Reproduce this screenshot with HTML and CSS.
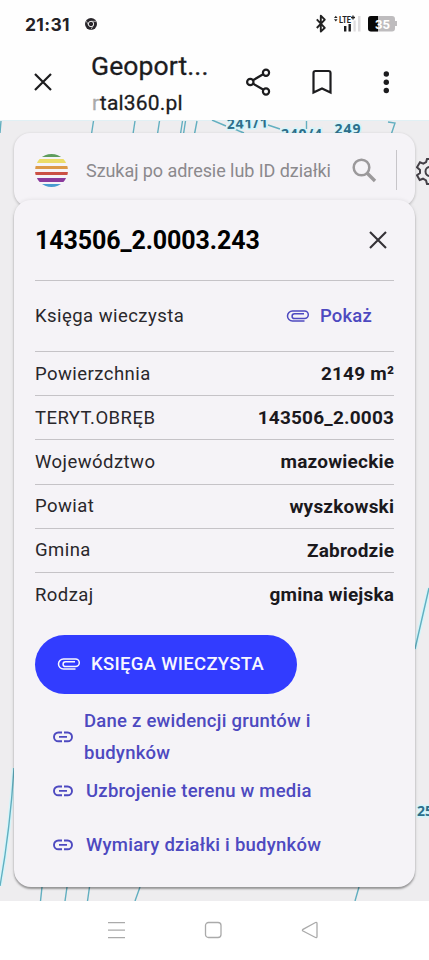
FILE: index.html
```html
<!DOCTYPE html>
<html lang="pl">
<head>
<meta charset="utf-8">
<title>Geoportal360.pl</title>
<link rel="stylesheet" href="styles.css">
</head>
<body>
<header class="status">
  <span class="clock">21:31</span>
  <svg class="chrome" width="12" height="12" viewBox="0 0 12 12"><circle cx="6" cy="6" r="6" fill="#29262b"/><circle cx="6" cy="6" r="2.7" fill="none" stroke="#fff" stroke-width=".9"/><path d="M6 3.3h5M3.7 7.3 1.4 3.2M8.3 7.3 6 11.5" stroke="#ddd" stroke-width=".7"/></svg>
  <svg class="signals" width="84" height="20" viewBox="314 15 84 20">
    <path d="M316.800 20.300l8 8.500-4 3.800V16.800l4 3.800-8 8.400" fill="none" stroke="#222" stroke-width="1.900" stroke-linejoin="round"/>
    <path d="M334 19l1.800-2.300 1.800 2.300zM334 20.300l1.800 2.300 1.800-2.300z" fill="#222"/>
    <text x="339" y="23.500" class="lte" textLength="12" lengthAdjust="spacingAndGlyphs">LTE</text>
    <path d="M351 18.500h4M353 16.500v4" stroke="#222" stroke-width="1.300"/>
    <path d="M344 27h2.400v5.500H344zM348.500 25h2.400v7.500h-2.400z" fill="#1b1b1d"/>
    <path d="M353.500 21.500h2.200v11h-2.200zM358 17h2.500v15.500H358z" fill="#dedcde"/>
    <path d="M371 17h21a3 3 0 0 1 3 3v2h2v5h-2v2.500a3 3 0 0 1-3 3h-21a3 3 0 0 1-3-3V20a3 3 0 0 1 3-3z" fill="#bebcbe"/>
    <path d="M378 17h-7a3 3 0 0 0-3 3v9.500a3 3 0 0 0 3 3h7z" fill="#080808"/>
    <text x="375" y="29.800" class="battery" textLength="15" lengthAdjust="spacingAndGlyphs">35</text>
  </svg>
</header>
<nav class="browser">
  <svg class="close-tab" width="18" height="18" viewBox="0 0 18 18"><path d="M1 1l16 16M17 1 1 17" stroke="#1c1c1e" stroke-width="2.200"/></svg>
  <div class="page-id"><div class="page-title">Geoport...</div><div class="page-url"><span class="fade">r</span>tal360.pl</div></div>
  <svg class="actions" width="148" height="30" viewBox="244 67 148 30" fill="none" stroke="#1c1c1e" stroke-width="2.200">
    <path d="M253 80.200l10.500-6.200M253 83.600l10.500 6.200"/><circle cx="250.300" cy="82" r="3.200"/><circle cx="266" cy="72.700" r="3.100"/><circle cx="266" cy="91.500" r="3.100"/>
    <path d="M313.500 92.500V73q0-2 2-2h13q2 0 2 2v19.500l-8.500-4z"/>
    <g fill="#1c1c1e" stroke="none"><circle cx="386.300" cy="74" r="2.700"/><circle cx="386.300" cy="82.200" r="2.700"/><circle cx="386.300" cy="90.500" r="2.700"/></g>
  </svg>
</nav>
<main class="map">
  <svg class="map-lines" width="429" height="781" viewBox="0 120 429 781">
    <g fill="none" stroke="#d4f5fa" stroke-width="4"><path d="M429 588l-14 61M14 768Q10 830 0 886"/></g>
    <g fill="none" stroke="#62afc0" stroke-width="1.400">
      <path d="M1 121l-1 12M93.500 121l-2 13M135 121l-2 13M159.500 121l-2 13M182.500 121l-2 13M185.500 121l-2 13M197 121l-2.500 13M212 120l14 6M232 128l12 5M268 125l12 4M306.500 121v8M388 122l7 1-4 12M429 588l-14 61M14 768Q10 830 0 886M42 887l-1.500 14M67 887l-2 14M89.500 887l-2 14M140 887l-5 14M359 887l-4 14"/>
    </g>
    <g class="parcel">
      <text x="227" y="129" transform="rotate(-2 227 129)" textLength="41">241/1</text>
      <text x="281" y="139" textLength="41">240/4</text>
      <text x="334.500" y="133.500" textLength="26">249</text>
      <text x="417" y="816">25</text>
    </g>
  </svg>
  <svg class="gear" width="13" height="28" viewBox="0 0 13 28"><path d="M11 2h6l1 3.500 3 1.500 3.500-1.500 3 5-3 2.500v3l3 2.500-3 5-3.500-1.500-3 1.500-1 3.500h-6l-1-3.500-3-1.800-3.300 1.300-2.700-4.700L4 16v-3L1 10.300l3-5 3.300 1.400 2.800-1.700z" fill="none" stroke="#444047" stroke-width="2"/><circle cx="14" cy="14.500" r="4.500" fill="none" stroke="#444047" stroke-width="2"/></svg>
  <section class="search">
    <span class="logo"></span>
    <span class="placeholder">Szukaj po adresie lub ID działki</span>
    <svg class="lens" width="25" height="25" viewBox="0 0 25 25" fill="none" stroke="#9b999b"><circle cx="9.500" cy="9.500" r="7.800" stroke-width="2.500"/><path d="M15 15l8 8" stroke-width="3.300"/></svg>
  </section>
  <section class="card">
    <div class="card-head"><h1>143506_2.0003.243</h1><svg width="18" height="18" viewBox="0 0 18 18"><path d="M1 1l16 16M17 1 1 17" stroke="#343136" stroke-width="2.100"/></svg></div>
    <div class="row register"><span class="label">Księga wieczysta</span><a class="show"><svg width="24" height="14" viewBox="0 0 24 14"><use href="#clip"/></svg><span>Pokaż</span></a></div>
    <div class="row"><span class="label">Powierzchnia</span><b>2149 m²</b></div>
    <div class="row"><span class="label">TERYT.OBRĘB</span><b>143506_2.0003</b></div>
    <div class="row"><span class="label">Województwo</span><b>mazowieckie</b></div>
    <div class="row"><span class="label">Powiat</span><b>wyszkowski</b></div>
    <div class="row"><span class="label">Gmina</span><b>Zabrodzie</b></div>
    <div class="row"><span class="label">Rodzaj</span><b>gmina wiejska</b></div>
    <a class="primary"><svg width="24" height="14" viewBox="0 0 24 14"><g id="clip"><path d="M18.500 12H6.500a5 5 0 0 1 0-10h12a3.700 3.700 0 0 1 0 7.600H8.500a2.300 2.300 0 0 1 0-4.800h9.500" fill="none" stroke="currentColor" stroke-width="1.500"/></g></svg><span>KSIĘGA WIECZYSTA</span></a>
    <div class="links">
      <a class="link"><svg width="20" height="12" viewBox="0 0 20 12"><g id="chain" fill="none" stroke="currentColor" stroke-width="1.900"><path d="M9 1.500H5.400a4.400 4.400 0 0 0 0 8.800H9M11 1.500h3.600a4.400 4.400 0 0 1 0 8.800H11M6 5.900h8"/></g></svg><span>Dane z ewidencji gruntów i<br>budynków</span></a>
      <a class="link second"><svg width="20" height="12" viewBox="0 0 20 12"><use href="#chain"/></svg><span>Uzbrojenie terenu w media</span></a>
      <a class="link third"><svg width="20" height="12" viewBox="0 0 20 12"><use href="#chain"/></svg><span>Wymiary działki i budynków</span></a>
    </div>
  </section>
</main>
<footer class="system-nav">
  <svg width="18" height="18" viewBox="0 0 18 18"><path d="M1 1.700h17M1 9.200h17M1 16.700h17"/></svg>
  <svg width="18" height="18" viewBox="0 0 18 18"><rect x="1.500" y="1.500" width="15.500" height="15" rx="3"/></svg>
  <svg width="18" height="18" viewBox="0 0 18 18"><path d="M14.500 1.500Q16 1 16 2.500v13q0 1.500-1.500 1L2 10q-1.200-.8 0-1.600z"/></svg>
</footer>
</body>
</html>
```
FILE: styles.css
```css
* { box-sizing: border-box; }
body { margin: 0; width: 429px; height: 960px; background: #fefefe; font-family: Roboto, sans-serif; overflow: hidden; }
svg { display: block; flex: none; overflow: visible; }
.status { display: flex; height: 48px; align-items: center; padding-left: 25px; }
.clock { width: 60px; font: 700 17.500px Inter, sans-serif; letter-spacing: .35px; color: #242226; white-space: nowrap; }
.signals { margin: 0 0 0 217px; }
.lte { font: 700 9px Roboto, sans-serif; fill: #222; }
.battery { font: 700 13.500px Roboto, sans-serif; fill: #fff; }
.browser { display: flex; height: 72px; align-items: flex-start; padding-left: 34px; }
.close-tab { margin-top: 25px; }
.page-id { width: 153px; margin-left: 39px; padding-top: 1px; color: #1c1c1e; white-space: nowrap; }
.page-title { font-size: 26.500px; line-height: 34px; letter-spacing: .1px; -webkit-text-stroke: .3px; }
.page-url { padding: 1px 0 0 1px; font-size: 21px; line-height: 38px; letter-spacing: .2px; -webkit-text-stroke: .3px; }
.fade { color: #aaa; }
.actions { margin-top: 19px; }
.map { position: relative; height: 781px; padding: 12px 14px 14px; background: #eeedef; border-top: 1px solid #e1f0f4; }
.map-lines { position: absolute; left: 0; top: -1px; overflow: hidden; }
.parcel { font: 700 14px "Open Sans", sans-serif; fill: #2d6f8b; stroke: #d4f5fa; stroke-width: 3px; paint-order: stroke; }
.gear { position: absolute; right: 0; top: 36px; overflow: hidden; }
.search { position: relative; display: flex; height: 74px; padding: 0 0 0 21px; align-items: center; background: #f5f3f7; border-radius: 16px; box-shadow: 0 1px 3px #0000003d; }
.search::after { content: ""; width: 1px; height: 40px; margin-left: 19px; background: #c7c5c9; }
.logo { width: 33px; height: 33px; margin-top: 1px; border-radius: 50%; background: linear-gradient(#5e9c5c 0 3px, #f5f3f7 3px 5px, #ebdc68 5px 9px, #f5f3f7 9px 11.500px, #dc9947 11.500px 15px, #f5f3f7 15px 17.500px, #cb5045 17.500px 21px, #f5f3f7 21px 24px, #8a3a9d 24px 27.500px, #f5f3f7 27.500px 29.500px, #489bd0 29.500px); }
.placeholder { width: 284px; padding-left: 18px; font-size: 18px; letter-spacing: -.06px; color: #8b898d; white-space: nowrap; }
.card { position: relative; height: 687px; margin-top: -7px; padding: 0 21px; background: #f5f3f7; border-radius: 17px; box-shadow: 0 2px 2px #00000058, 0 0 4px #00000018; }
.card-head { display: flex; height: 80px; justify-content: space-between; align-items: center; padding-right: 7px; }
h1 { margin: 0; font-size: 25px; font-weight: 700; letter-spacing: -.1px; color: #000; }
.row { display: flex; height: 44.200px; justify-content: space-between; align-items: center; border-top: 1px solid #c5c3c7; font-size: 18.500px; color: #29272b; white-space: nowrap; }
.register { height: 71px; }
.label { letter-spacing: .45px; }
.row b { font-size: 19px; letter-spacing: .2px; margin-right: -.2px; color: #1b191d; }
.show { display: flex; align-items: center; gap: 10px; padding-right: 22px; color: #4d49c0; font-weight: 500; letter-spacing: .2px; }
.primary { display: flex; width: 262px; height: 59px; margin-top: 18.500px; padding-left: 22px; align-items: center; gap: 10px; border-radius: 30px; background: #323cff; color: #f8f7ff; font-size: 18.500px; font-weight: 500; letter-spacing: .3px; white-space: nowrap; }
.links { padding: 11px 0 0 18px; color: #4d49c0; font-size: 18.500px; font-weight: 500; letter-spacing: .24px; line-height: 32px; white-space: nowrap; }
.link { display: flex; align-items: center; gap: 11px; }
.link.second, .link.third { gap: 13px; }
.second { margin-top: 6px; }
.third { margin-top: 22px; }
.system-nav { display: flex; height: 59px; padding: 0 110px 2px 107px; justify-content: space-between; align-items: center; background: #fff; }
.system-nav svg { fill: none; stroke: #aaa; stroke-width: 1.300; }
```
